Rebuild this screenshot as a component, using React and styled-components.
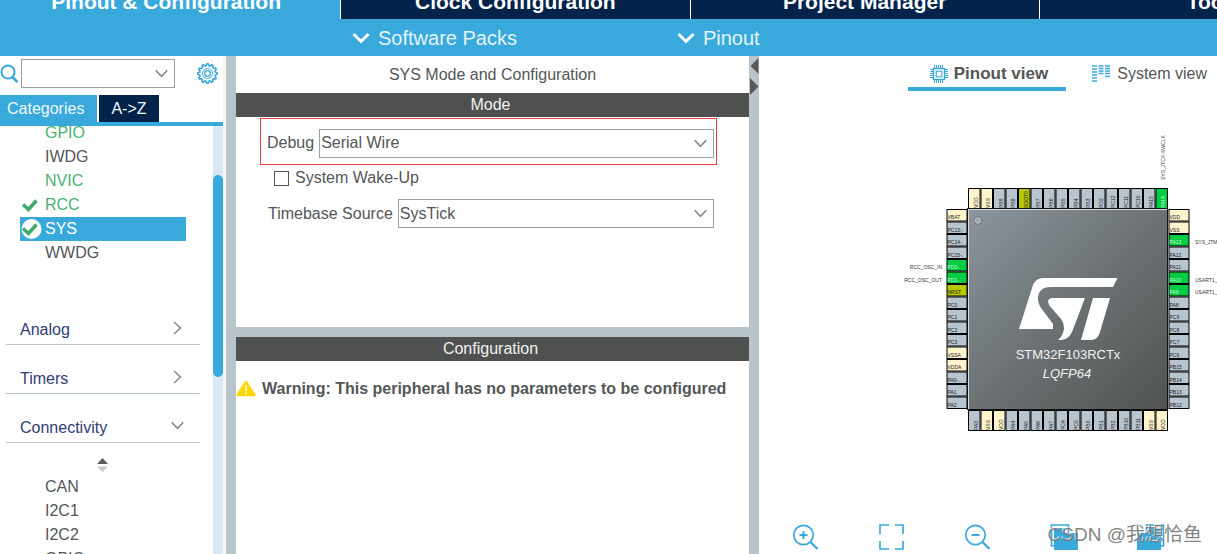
import React from 'react';
import styled, { createGlobalStyle } from 'styled-components';

const sky = '#39a9dc';
const navy = '#03234b';
const steel = '#b8c4ca';
const green = '#49b170';

const GlobalStyle = createGlobalStyle`
  * { box-sizing: border-box; }
  body {
    margin: 0;
    font: 16px/24px "Liberation Sans", Arial, sans-serif;
    color: #545657;
    background: #fff;
  }
  button, select, input { font: inherit; color: inherit; margin: 0; border-radius: 0; }
  button { border: 0; padding: 0; background: none; }
`;

const Page = styled.div`
  position: relative;
  display: flex;
  flex-direction: column;
  height: 100vh;
  overflow: hidden;
`;

const MainTabs = styled.nav`
  flex: none;
  display: grid;
  grid-template-columns: repeat(4, 1fr);
  margin: -16px -172px 0 -8px;
`;

const MainTab = styled.button`
  height: 35px;
  border-right: 1px solid #fff;
  background: ${(p) => (p.$active ? sky : navy)};
  color: #fff;
  font-size: 21px;
  font-weight: bold;
  line-height: 35px;
`;

const SubBar = styled.div`
  flex: none;
  display: flex;
  gap: 160px;
  height: 37px;
  padding-left: 352px;
  background: ${sky};
`;

const SubButton = styled.button`
  display: flex;
  align-items: center;
  gap: 8px;
  color: #e4f4fc;
  font-size: 20px;
`;

const Workspace = styled.main`
  flex: 1;
  min-height: 0;
  display: grid;
  grid-template-columns: 226px minmax(0, 533fr) minmax(0, 458fr);
`;

const Sidebar = styled.aside`
  display: flex;
  flex-direction: column;
  min-height: 0;
  border-right: 3px solid #f2f4f5;
`;

const SearchRow = styled.div`
  flex: none;
  display: flex;
  align-items: center;
  height: 39px;
  padding: 0 5px 4px 0;
`;

const SearchBox = styled.label`
  display: flex;
  align-items: center;
  gap: 3px;
  margin-right: auto;
`;

const SelectWrap = styled.span`
  position: relative;
  display: flex;
  flex: ${(p) => (p.$width ? 'none' : '1')};
  width: ${(p) => p.$width || 'auto'};
  svg {
    position: absolute;
    right: 7px;
    top: 10px;
    pointer-events: none;
  }
`;

const Select = styled.select`
  appearance: none;
  width: 100%;
  height: 29px;
  padding: 0 24px 0 1px;
  border: 1px solid #98a1a8;
  background: #fff;
`;

const IconButton = styled.button`
  display: flex;
`;

const SideTabs = styled.div`
  flex: none;
  display: flex;
  gap: 2px;
  border-bottom: 4px solid ${sky};
`;

const SideTab = styled.button`
  height: 27px;
  padding: 0 ${(p) => (p.$active ? '13px 0 7px' : '12px')};
  background: ${(p) => (p.$active ? sky : navy)};
  color: #eef8fd;
`;

const SideBody = styled.div`
  flex: 1;
  min-height: 0;
  display: flex;
  justify-content: space-between;
  overflow: hidden;
`;

const Tree = styled.div`
  width: 200px;
  margin-top: -5px;
`;

const PeripheralList = styled.ul`
  margin: 0 0 31px;
  padding: 0 14px 0 20px;
  list-style: none;
`;

const Peripheral = styled.li`
  display: flex;
  align-items: center;
  gap: 5px;
  height: 24px;
  background: ${(p) => (p.$selected ? sky : 'transparent')};
  color: ${(p) => (p.$selected ? '#fff' : p.$ready ? green : '#545657')};
`;

const Mark = styled.span`
  display: flex;
  width: 20px;
`;

const Group = styled.button`
  display: flex;
  justify-content: space-between;
  align-items: center;
  width: calc(100% - 6px);
  height: 49px;
  margin-left: 6px;
  padding: 19px 16px 0 14px;
  border-bottom: 1px solid ${steel};
  color: #2f4075;
  svg { margin-bottom: 4px; }
`;

const Sorter = styled.div`
  display: flex;
  justify-content: center;
  align-items: center;
  height: 32px;
  padding: 11px 0 0 4px;
`;

const ScrollTrack = styled.div`
  width: 10px;
  padding-top: 49px;
  background: #d8e8f5;
`;

const ScrollThumb = styled.div`
  height: 202px;
  border-radius: 5px;
  background: ${sky};
`;

const Center = styled.section`
  position: relative;
  display: flex;
  flex-direction: column;
  border: solid ${steel};
  border-width: 0 10px;
  min-height: 0;
`;

const PaneTitle = styled.h1`
  margin: 0;
  font-size: 16px;
  font-weight: normal;
  line-height: 37px;
  text-align: center;
`;

const BarTitle = styled.h2`
  flex: none;
  height: 24px;
  margin: 0;
  padding-right: 4px;
  background: #4f5150;
  color: #f1f1f1;
  font-size: 16px;
  font-weight: normal;
  text-align: center;
`;

const ModeForm = styled.form`
  flex: none;
  min-height: 220px;
  padding: 1px 32px 0 24px;
  border-bottom: 10px solid ${steel};
`;

const Field = styled.label`
  display: flex;
  align-items: center;
  gap: 5px;
  height: 47px;
  padding: ${(p) => (p.$marked ? '3px 2px 0 6px' : '0 3px 0 8px')};
  border: ${(p) => (p.$marked ? '1px solid #f03c3c' : '0')};
`;

const CheckRow = styled.label`
  display: flex;
  align-items: center;
  gap: 6px;
  padding: 1px 0 0 14px;
`;

const Check = styled.input`
  appearance: none;
  width: 15px;
  height: 15px;
  border: 1px solid #555;
  background: #fff;
`;

const Warning = styled.p`
  display: flex;
  align-items: center;
  gap: 6px;
  margin: 16px 0 0;
  font-weight: bold;
  white-space: nowrap;
`;

const SplitterArrows = styled.div`
  position: absolute;
  top: 0;
  right: -10px;
  display: flex;
`;

const View = styled.section`
  display: flex;
  flex-direction: column;
  min-width: 0;
  overflow: hidden;
`;

const ViewTabs = styled.div`
  flex: none;
  display: flex;
  justify-content: flex-end;
  gap: 26px;
  padding-right: 10px;
`;

const ViewTab = styled.button`
  display: flex;
  align-items: center;
  gap: ${(p) => (p.$active ? '6px' : '7px')};
  height: 35px;
  padding: ${(p) => (p.$active ? '5px 18px 0 22px' : '5px 0 0')};
  border-bottom: 4px solid ${(p) => (p.$active ? sky : 'transparent')};
  font-size: ${(p) => (p.$active ? '17px' : '16px')};
  font-weight: ${(p) => (p.$active ? 'bold' : 'normal')};
  white-space: nowrap;
`;

const Canvas = styled.div`
  flex: 1;
  min-height: 0;
  display: flex;
  justify-content: flex-end;
  align-items: flex-start;
  padding-top: 39px;
  overflow: hidden;
`;

const Tools = styled.div`
  flex: none;
  display: flex;
  gap: 58px;
  padding: 0 0 3px 33px;
`;

const Watermark = styled.div`
  position: absolute;
  right: 15px;
  bottom: 6px;
  color: rgba(115, 115, 115, 0.9);
  font: 19px/26px "Liberation Sans", "Noto Sans CJK SC", sans-serif;
  text-shadow: -1px -1px 0 rgba(255, 255, 255, 0.7);
`;

const Chevron = () => (
  <svg width="13" height="9" viewBox="0 0 13 9" fill="none" stroke="#858585" strokeWidth="1.5">
    <path d="M.7 1.2 6.5 7.3 12.3 1.2" />
  </svg>
);

const RightChevron = () => (
  <svg width="13" height="14" viewBox="0 0 13 14" fill="none" stroke="#858585" strokeWidth="1.5">
    <path d="M3 1 9.5 7 3 13" />
  </svg>
);

const MenuChevron = () => (
  <svg width="18" height="12" viewBox="0 0 18 12" fill="none" stroke="#fff" strokeWidth="3">
    <path d="M1.5 2 9 9.5 16.5 2" />
  </svg>
);

const CheckMark = ({ selected }) => (
  <svg width="22" height="22" viewBox="0 0 22 22" overflow="visible">
    {selected && <circle cx="11.5" cy="11" r="10" fill="#fff" />}
    <path d="M3 10.5 8.5 15.5 16.5 6.5" fill="none" stroke="#3fa968" strokeWidth="3.4" />
  </svg>
);

const Magnifier = () => (
  <svg width="18" height="20" viewBox="0 0 18 20" fill="none" stroke={sky} strokeWidth="2">
    <circle cx="8" cy="8" r="6.6" />
    <path d="m12.5 13 5 5" strokeWidth="2.6" />
  </svg>
);

const Gear = () => {
  const pts = [];
  for (let i = 0; i < 48; i += 1) {
    const r = i % 4 < 2 ? 9.7 : 7.9;
    const a = (i / 48) * Math.PI * 2 - Math.PI / 2 - 0.065;
    pts.push(`${(10.5 + r * Math.cos(a)).toFixed(2)},${(10.5 + r * Math.sin(a)).toFixed(2)}`);
  }
  return (
    <svg width="21" height="21" viewBox="0 0 21 21" fill="none" stroke={sky} strokeWidth="1.6">
      <polygon points={pts.join(' ')} />
      <circle cx="10.5" cy="10.5" r="5" strokeWidth="1" />
      <circle cx="10.5" cy="10.5" r="2.8" strokeWidth="1.3" />
    </svg>
  );
};

const ChipIcon = () => (
  <svg width="18" height="18" viewBox="0 0 18 18" fill="none" stroke={sky}>
    <path
      d="M4.5 0v3M6.5 0v3M8.5 0v3M10.5 0v3M12.5 0v3M4.5 15v3M6.5 15v3M8.5 15v3M10.5 15v3M12.5 15v3M0 4.5h3M0 6.5h3M0 8.5h3M0 10.5h3M0 12.5h3M15 4.5h3M15 6.5h3M15 8.5h3M15 10.5h3M15 12.5h3"
      strokeWidth="1"
    />
    <rect x="3.5" y="3.5" width="11" height="11" strokeWidth="1.4" />
    <rect x="6.2" y="6.2" width="5.6" height="5.6" strokeWidth="1.1" />
  </svg>
);

const SystemIcon = () => (
  <svg width="18" height="18" viewBox="0 0 18 18" stroke={sky} strokeWidth="1.4">
    <path d="M0 1h5M0 4h5M0 7h5M0 10h5M0 13h5M0 16h5M6.5 1h5M6.5 3.5h5M6.5 6h5M6.5 8.5h5M13 1h5M13 3.5h5M13 6h5M13 8.5h5M13 11.5h5" />
  </svg>
);

const WarningIcon = () => (
  <svg width="20" height="19" viewBox="0 0 20 19">
    <path d="M10 2 18.5 15H1.5Z" fill="#ffd500" stroke="#ffd500" strokeWidth="2.4" strokeLinejoin="round" />
    <path d="M10 5v6M10 12.5v2" stroke="#fff8c8" strokeWidth="1.8" />
  </svg>
);

const ZoomIcon = ({ plus }) => (
  <svg width="28" height="28" viewBox="0 0 28 28" fill="none" stroke={sky} strokeWidth="1.7">
    <circle cx="11.5" cy="12" r="9.7" />
    <path d="m18.5 19 7 7" strokeWidth="2.2" />
    <path d={plus ? 'M7.5 12h8M11.5 8v8' : 'M7.5 12h8'} strokeWidth="2" />
  </svg>
);

const FitIcon = () => (
  <svg width="28" height="28" viewBox="0 0 28 28" fill="none" stroke={sky} strokeWidth="1.7">
    <path d="M2 11V2h9M17 2h8v9M25 18v8h-8M11 26H2v-8" />
  </svg>
);

const RotateIcon = ({ flip }) => (
  <svg width="28" height="28" viewBox="0 0 28 28" overflow="visible">
    <g transform={flip ? 'matrix(-1 0 0 1 29 0)' : undefined}>
      <path d="M4 23H1.5V2h17v8" fill="none" stroke={sky} strokeWidth="1.7" />
      <path d="M4 5h11v5h13v17H4Z" fill={sky} />
    </g>
  </svg>
);

const STLogo = () => (
  <g fill="#fff">
    <path d="M1117.5 278H1043Q1036 278 1033 285L1019 329H1053V324L1041 308Q1036 300 1039 293Q1042 287 1050 287H1113Z" />
    <path d="M1085 298H1052Q1046 299 1049 305L1061 319Q1067 327 1061 337L1058 340H1061Q1069 339 1072 332Z" />
    <path d="M1110 298H1093L1081 340H1092Q1098 339 1100 332Z" />
  </g>
);

const pinsLeft = 'VBAT PC13-. PC14-. PC15-. PD0-. PD1-. NRST PC0 PC1 PC2 PC3 VSSA VDDA PA0-. PA1 PA2'.split(' ');
const pinsTop = 'VDD VSS PB9 PB8 BOOT0 PB7 PB6 PB5 PB4 PB3 PD2 PC12 PC11 PC10 PA15 PA14'.split(' ');
const pinsRight = 'VDD VSS PA13 PA12 PA11 PA10 PA9 PA8 PC9 PC8 PC7 PC6 PB15 PB14 PB13 PB12'.split(' ');
const pinsBottom = 'PA3 VSS VDD PA4 PA5 PA6 PA7 PC4 PC5 PB0 PB1 PB2 PB10 PB11 VSS VDD'.split(' ');
const activePins = ['PD0-.', 'PD1-.', 'PA14', 'PA13', 'PA10', 'PA9'];

const pinColor = (name) => {
  if (activePins.includes(name)) return '#00cc44';
  if (name === 'NRST' || name === 'BOOT0') return '#b5c800';
  return name.startsWith('V') ? '#fff4cc' : '#b8c4ce';
};

const Pin = ({ name, x, y, vertical }) => {
  const ink = activePins.includes(name) ? '#c9ffd8' : '#222';
  return (
    <g>
      <rect x={x} y={y} width={vertical ? 12.5 : 21} height={vertical ? 21 : 12.5} fill="#000" />
      <rect
        x={x + 1}
        y={y + 1}
        width={vertical ? 10.5 : 19}
        height={vertical ? 19 : 10.5}
        fill={pinColor(name)}
      />
      <text
        fontSize="5"
        fill={ink}
        transform={vertical ? `translate(${x + 9.5} ${y + 20}) rotate(-90)` : `translate(${x + 1} ${y + 10})`}
      >
        {name}
      </text>
    </g>
  );
};

const ChipDiagram = () => (
  <svg width="318" height="306" viewBox="899 130 318 306" fontFamily="Liberation Sans, Arial, sans-serif">
    <defs>
      <linearGradient id="body" x1="0" y1="0" x2="1" y2="1">
        <stop offset="0" stopColor="#8c959e" />
        <stop offset="0.5" stopColor="#6c7274" />
        <stop offset="1" stopColor="#505352" />
      </linearGradient>
    </defs>
    {pinsLeft.map((n, i) => <Pin key={i} name={n} x={946.5} y={209 + i * 12.5} />)}
    {pinsRight.map((n, i) => <Pin key={i} name={n} x={1168.5} y={209 + i * 12.5} />)}
    {pinsTop.map((n, i) => <Pin key={i} name={n} x={968 + i * 12.5} y={188} vertical />)}
    {pinsBottom.map((n, i) => <Pin key={i} name={n} x={968 + i * 12.5} y={410} vertical />)}
    <rect x="967.5" y="208.5" width="200" height="201" fill="url(#body)" stroke="#111" />
    <path d="M968.5 409V209.5H1167" fill="none" stroke="#d8dcde" />
    <circle cx="978" cy="220.5" r="3" fill="#9eaab2" stroke="#c9d0d4" />
    <circle cx="978" cy="220.5" r="3.8" fill="none" stroke="#5f676c" strokeWidth="0.7" />
    <STLogo />
    <g fill="#f2f2f2" fontSize="13" textAnchor="middle">
      <text x="1068" y="359">STM32F103RCTx</text>
      <text x="1067" y="378" fontStyle="italic">LQFP64</text>
    </g>
    <g fill="#333" fontSize="5">
      <text x="942" y="269" textAnchor="end">RCC_OSC_IN</text>
      <text x="942" y="282" textAnchor="end">RCC_OSC_OUT</text>
      <text x="1195" y="244">SYS_JTMS-SWDIO</text>
      <text x="1195" y="282">USART1_RX</text>
      <text x="1195" y="294">USART1_TX</text>
      <text transform="translate(1165 180) rotate(-90)">SYS_JTCK-SWCLK</text>
    </g>
  </svg>
);

const systemCore = [
  { name: 'GPIO', ready: true },
  { name: 'IWDG' },
  { name: 'NVIC', ready: true },
  { name: 'RCC', ready: true, checked: true },
  { name: 'SYS', selected: true, checked: true },
  { name: 'WWDG' },
];
const connectivity = [{ name: 'CAN' }, { name: 'I2C1' }, { name: 'I2C2' }, { name: 'GPIO' }];

const Peripherals = ({ items }) => (
  <PeripheralList>
    {items.map((p) => (
      <Peripheral key={p.name} $ready={p.ready} $selected={p.selected}>
        <Mark>{p.checked && <CheckMark selected={p.selected} />}</Mark>
        {p.name}
      </Peripheral>
    ))}
  </PeripheralList>
);

export default function App() {
  return (
    <Page>
      <GlobalStyle />
      <MainTabs>
        <MainTab $active>Pinout &amp; Configuration</MainTab>
        <MainTab>Clock Configuration</MainTab>
        <MainTab>Project Manager</MainTab>
        <MainTab>Tools</MainTab>
      </MainTabs>
      <SubBar>
        <SubButton><MenuChevron />Software Packs</SubButton>
        <SubButton><MenuChevron />Pinout</SubButton>
      </SubBar>
      <Workspace>
        <Sidebar>
          <SearchRow>
            <SearchBox>
              <Magnifier />
              <SelectWrap $width="154px">
                <Select aria-label="Search peripherals" defaultValue=""><option value="" /></Select>
                <Chevron />
              </SelectWrap>
            </SearchBox>
            <IconButton aria-label="Settings"><Gear /></IconButton>
          </SearchRow>
          <SideTabs>
            <SideTab $active>Categories</SideTab>
            <SideTab>A-&gt;Z</SideTab>
          </SideTabs>
          <SideBody>
            <Tree>
              <Peripherals items={systemCore} />
              <Group>Analog<RightChevron /></Group>
              <Group>Timers<RightChevron /></Group>
              <Group>Connectivity<Chevron /></Group>
              <Sorter>
                <svg width="11" height="14" viewBox="0 0 11 14">
                  <path d="M0 6 5.5 0 11 6Z" fill="#5c5c5c" />
                  <path d="M0 8.5 5.5 14 11 8.5Z" fill="#c9c9c9" />
                </svg>
              </Sorter>
              <Peripherals items={connectivity} />
            </Tree>
            <ScrollTrack><ScrollThumb /></ScrollTrack>
          </SideBody>
        </Sidebar>
        <Center>
          <PaneTitle>SYS Mode and Configuration</PaneTitle>
          <BarTitle>Mode</BarTitle>
          <ModeForm>
            <Field $marked>
              Debug
              <SelectWrap>
                <Select defaultValue="Serial Wire"><option>Serial Wire</option></Select>
                <Chevron />
              </SelectWrap>
            </Field>
            <CheckRow>
              <Check type="checkbox" />
              System Wake-Up
            </CheckRow>
            <Field>
              Timebase Source
              <SelectWrap>
                <Select defaultValue="SysTick"><option>SysTick</option></Select>
                <Chevron />
              </SelectWrap>
            </Field>
          </ModeForm>
          <BarTitle>Configuration</BarTitle>
          <Warning><WarningIcon />Warning: This peripheral has no parameters to be configured</Warning>
          <SplitterArrows>
            <svg width="10" height="40" viewBox="0 0 10 40" fill="#58595b">
              <path d="M9.5 2v16L1.5 10ZM1 22v17L9.5 30.5Z" />
            </svg>
          </SplitterArrows>
        </Center>
        <View>
          <ViewTabs>
            <ViewTab $active><ChipIcon />Pinout view</ViewTab>
            <ViewTab><SystemIcon />System view</ViewTab>
          </ViewTabs>
          <Canvas><ChipDiagram /></Canvas>
          <Tools>
            <IconButton aria-label="Zoom in"><ZoomIcon plus /></IconButton>
            <IconButton aria-label="Fit"><FitIcon /></IconButton>
            <IconButton aria-label="Zoom out"><ZoomIcon /></IconButton>
            <IconButton aria-label="Rotate right"><RotateIcon /></IconButton>
            <IconButton aria-label="Rotate left"><RotateIcon flip /></IconButton>
          </Tools>
        </View>
      </Workspace>
      <Watermark>CSDN @我想恰鱼</Watermark>
    </Page>
  );
}
